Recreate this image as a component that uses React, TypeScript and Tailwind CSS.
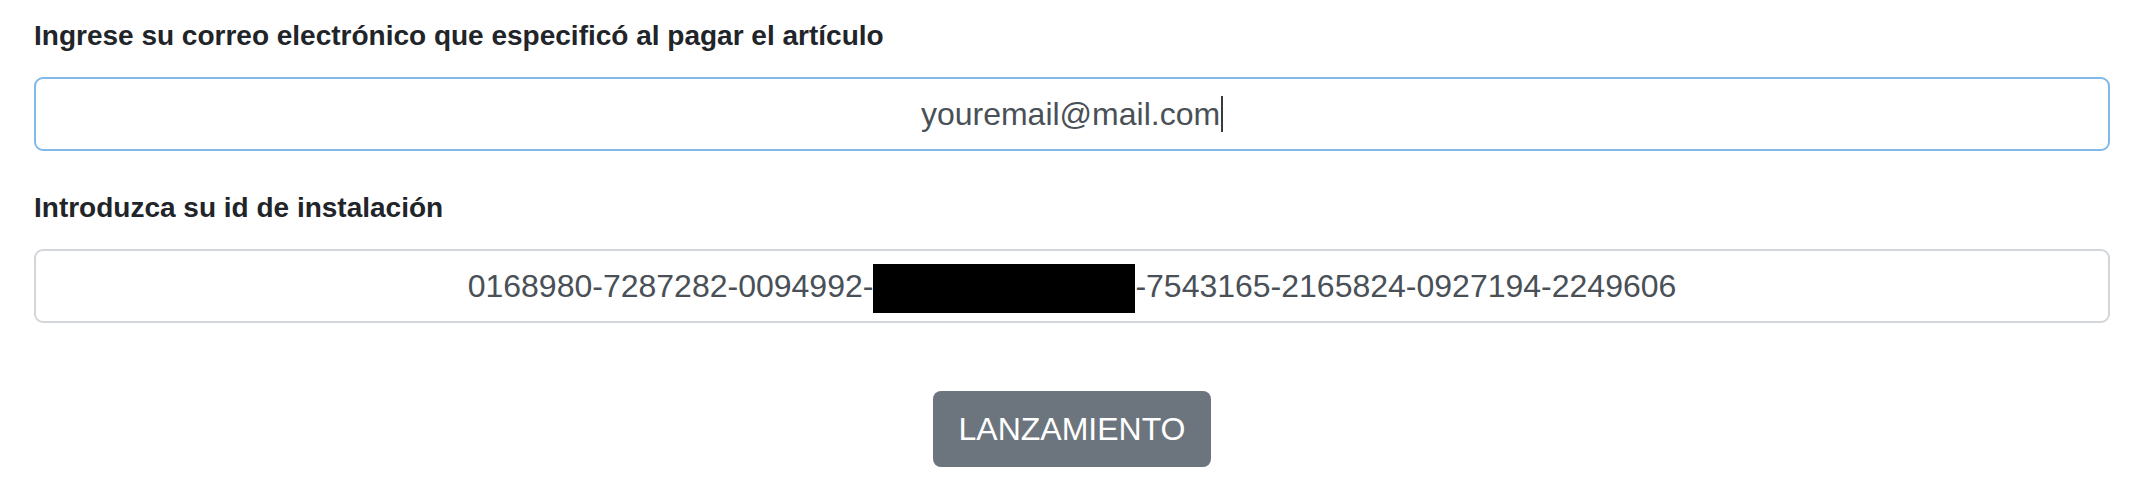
import React from 'react';

const font = { fontFamily: '"Liberation Sans", Arial, Helvetica, sans-serif' };

export default function App() {
  const email = 'youremail@mail.com';
  const idStart = '0168980-7287282-0094992-';
  const idEnd = '-7543165-2165824-0927194-2249606';

  return (
    <div className="min-h-screen bg-white px-[34px] pt-[15px]" style={font}>
      <label className="block text-[28px] leading-[42px] font-bold text-[#212529]">
        Ingrese su correo electrónico que especificó al pagar el artículo
      </label>
      <div className="mt-[20px] flex h-[74px] items-center justify-center rounded-[9px] border-2 border-[#80b8ea] bg-white text-[32px] text-[#495057]">
        <span>{email}</span>
        <span className="ml-[1px] inline-block h-[36px] w-[2px] bg-[#3a3a3a]" />
      </div>

      <label className="mt-[36px] block text-[28px] leading-[42px] font-bold text-[#212529]">
        Introduzca su id de instalación
      </label>
      <div className="mt-[20px] flex h-[74px] items-center justify-center rounded-[9px] border-2 border-[#d2d5d9] bg-white text-[32px] text-[#495057]">
        <span>{idStart}</span>
        <span className="mt-[5px] inline-block h-[49px] w-[262px] bg-black" />
        <span>{idEnd}</span>
      </div>

      <div className="mt-[68px] flex justify-center">
        <button
          type="button"
          className="h-[76px] w-[278px] rounded-[8px] bg-[#6c757d] text-[32px] leading-none text-white"
        >
          LANZAMIENTO
        </button>
      </div>
    </div>
  );
}
